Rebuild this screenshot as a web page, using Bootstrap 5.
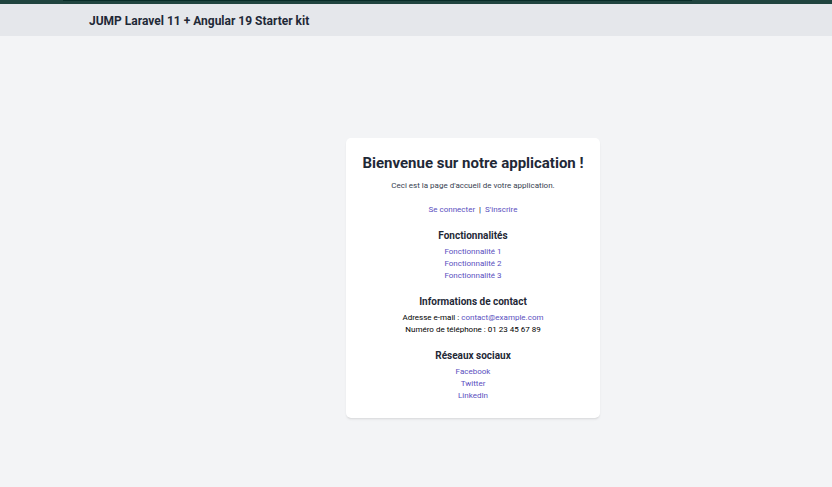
<!DOCTYPE html>
<html lang="fr">
<head>
<meta charset="utf-8">
<meta name="viewport" content="width=device-width, initial-scale=1">
<title>JUMP Laravel 11 + Angular 19 Starter kit</title>
<link href="https://cdn.jsdelivr.net/npm/bootstrap@5.3.0/dist/css/bootstrap.min.css" rel="stylesheet">
<style>
body { font-family: Roboto, sans-serif; font-size: 8px; line-height: 12px; color: #000; background: #f3f4f6; }
.top-strip { height: 4px; background: #20443f; }
.top-strip-line { width: 629px; height: 1px; margin-left: 63px; background: #082c27; }
.site-header { padding: 8px 89px 6px; background: #e5e7eb; }
.site-title { font-size: 12px; line-height: 18px; font-weight: 700; color: #1f2937; }
.page-main { padding: 102px 0 16px 114px; }
.welcome-card { border-radius: 5px; box-shadow: 0 2px 3px -1px rgba(0,0,0,.1), 0 1px 2px -1px rgba(0,0,0,.1); }
.welcome-card h1 { font-size: 15px; line-height: 18px; font-weight: 700; color: #1f2937; }
.welcome-card h2 { font-size: 10px; line-height: 16px; font-weight: 700; color: #1f2937; margin: 0 0 2px; }
.welcome-card section { margin-top: 12px; }
.intro { color: #374151; margin-bottom: 12px; }
.welcome-card a { color: #5a4fc0; text-decoration: none; }
.welcome-card a:hover { text-decoration: underline; }
</style>
<script defer src="https://cdn.jsdelivr.net/npm/bootstrap@5.3.0/dist/js/bootstrap.bundle.min.js"></script>
</head>
<body>
<div class="top-strip"><div class="top-strip-line"></div></div>
<header class="site-header">
  <div class="site-title">JUMP Laravel 11 + Angular 19 Starter kit</div>
</header>
<main class="page-main d-flex justify-content-center">
  <div class="welcome-card bg-white text-center p-3">
    <h1 class="mb-2">Bienvenue sur notre application !</h1>
    <p class="intro">Ceci est la page d'accueil de votre application.</p>
    <nav class="d-flex justify-content-center gap-1" aria-label="Compte">
      <a href="#">Se connecter</a><span>|</span><a href="#">S'inscrire</a>
    </nav>
    <section>
      <h2>Fonctionnalités</h2>
      <ul class="list-unstyled mb-0">
        <li><a href="#">Fonctionnalité 1</a></li>
        <li><a href="#">Fonctionnalité 2</a></li>
        <li><a href="#">Fonctionnalité 3</a></li>
      </ul>
    </section>
    <section>
      <h2>Informations de contact</h2>
      <p class="mb-0">Adresse e-mail : <a href="mailto:contact@example.com">contact@example.com</a></p>
      <p class="mb-0">Numéro de téléphone : 01 23 45 67 89</p>
    </section>
    <section>
      <h2>Réseaux sociaux</h2>
      <ul class="list-unstyled mb-0">
        <li><a href="#">Facebook</a></li>
        <li><a href="#">Twitter</a></li>
        <li><a href="#">LinkedIn</a></li>
      </ul>
    </section>
  </div>
</main>
</body>
</html>
